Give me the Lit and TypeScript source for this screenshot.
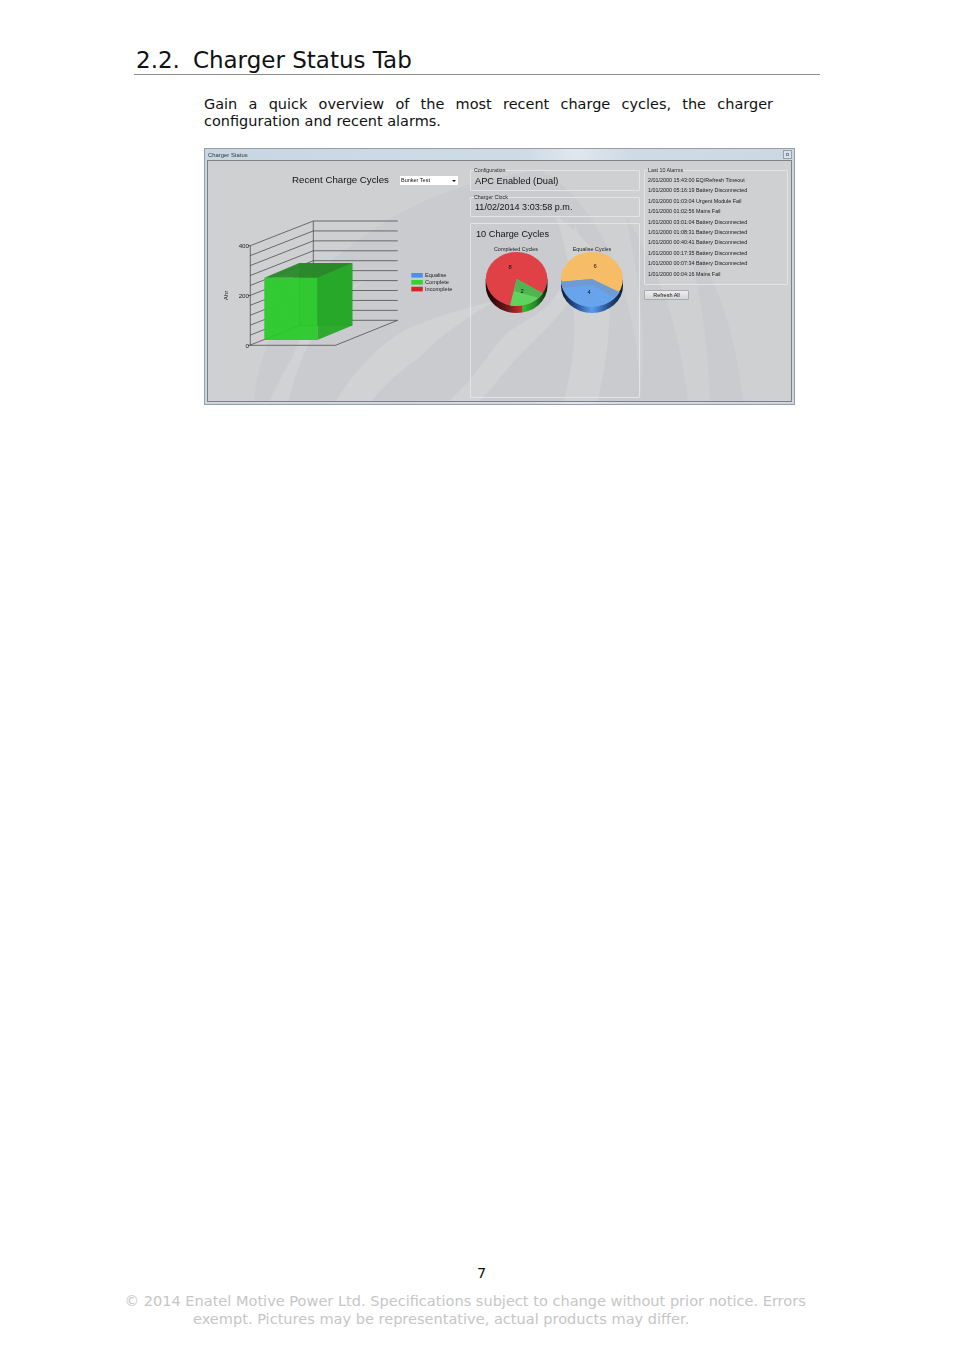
import { LitElement, html, css, svg } from "lit";
import { customElement } from "lit/decorators.js";

const alarms = [
  "2/01/2000 15:43:00 EQ/Refresh Timeout",
  "1/01/2000 05:16:19 Battery Disconnected",
  "1/01/2000 01:03:04 Urgent Module Fail",
  "1/01/2000 01:02:56 Mains Fail",
  "1/01/2000 03:01:04 Battery Disconnected",
  "1/01/2000 01:08:31 Battery Disconnected",
  "1/01/2000 00:40:41 Battery Disconnected",
  "1/01/2000 00:17:35 Battery Disconnected",
  "1/01/2000 00:07:34 Battery Disconnected",
  "1/01/2000 00:04:16 Mains Fail",
];

const range = (n: number) => Array.from({ length: n }, (_, i) => i);

function chart() {
  return svg`
    <svg class="chart" viewBox="208 161 262 242" width="262" height="242">
      <g stroke="#3d3d3d" stroke-width="0.7" fill="none">
        ${range(11).map((i) => {
          const yb = 221 + i * 9.93;
          const yf = 245.7 + i * 9.93;
          return svg`<path d="M250.3 ${yf}L313.3 ${yb}H397.7" />`;
        })}
        <path d="M250.3 245.7V345.3M313.3 221V320.3" />
        <path d="M250.3 345.3H335.5L397.7 320.3" />
        ${[245.7, 295.5, 345.3].map((y) => svg`<path d="M248 ${y}H250.3" />`)}
      </g>
      <path d="M299.3 263H352.3V325.4H299.3Z" fill="#1f8f1f" fill-opacity="0.9" />
      <path d="M264.3 277.7L299.3 263H352.3L317.3 277.7Z" fill="#2a882a" fill-opacity="0.95" />
      <path d="M317.3 277.7L352.3 263V325.4L317.3 340Z" fill="#28a828" fill-opacity="0.97" />
      <path d="M264.3 277.7H317.3V340H264.3Z" fill="#30cb30" fill-opacity="0.98" />
      <path d="M299.3 263V325.4L264.3 340M299.3 325.4H352.3" stroke="#1f8a1f" stroke-width="0.5" fill="none" opacity="0.3" />
      <text class="tick" x="249" y="248" text-anchor="end">400</text>
      <text class="tick" x="249" y="298" text-anchor="end">200</text>
      <text class="tick" x="249" y="347.5" text-anchor="end">0</text>
      <text class="tick" transform="translate(228 295.5) rotate(-90)" text-anchor="middle">Ahr</text>
      <rect x="411.3" y="273" width="11.5" height="4.6" fill="#4f8fe8" />
      <rect x="411.3" y="280" width="11.5" height="4.6" fill="#35d035" />
      <rect x="411.3" y="286.8" width="11.5" height="4.6" fill="#dd2025" />
      <text class="legend" x="425" y="277.3">Equalise</text>
      <text class="legend" x="425" y="284.2">Complete</text>
      <text class="legend" x="425" y="291">Incomplete</text>
    </svg>`;
}

function pies() {
  return svg`
    <svg class="pies" viewBox="470 240 170 80" width="170" height="80">
      <defs>
        <linearGradient id="sideL" x1="0" x2="1" y1="0" y2="0">
          <stop offset="0" stop-color="#1a0505" />
          <stop offset="0.3" stop-color="#5e1616" />
          <stop offset="0.58" stop-color="#c23030" />
          <stop offset="0.6" stop-color="#2ec22e" />
          <stop offset="0.8" stop-color="#2a8a2a" />
          <stop offset="1" stop-color="#0c200c" />
        </linearGradient>
        <linearGradient id="sideR" x1="0" x2="1" y1="0" y2="0">
          <stop offset="0" stop-color="#0d1a30" />
          <stop offset="0.25" stop-color="#28528f" />
          <stop offset="0.5" stop-color="#5a9bf0" />
          <stop offset="0.75" stop-color="#28528f" />
          <stop offset="1" stop-color="#0d1a30" />
        </linearGradient>
      </defs>
      <text class="pie-title" x="516" y="251" text-anchor="middle">Completed Cycles</text>
      <text class="pie-title" x="592" y="251" text-anchor="middle">Equalise Cycles</text>

      <path d="M485.7 279V286A30.8 27 0 0 0 547.5 286V279Z" fill="url(#sideL)" />
      <ellipse cx="516.6" cy="279" rx="30.8" ry="27" fill="#e04146" />
      <path d="M516.7 279L542.7 293.3A30.8 27 0 0 1 510 305.4Z" fill="#5fd35f" />
      <path d="M516.7 279L542.7 293.3L539 298L514 291Z" fill="#50b550" />
      <text class="pie-num" x="510" y="269" text-anchor="middle">8</text>
      <text class="pie-num" x="522" y="293" text-anchor="middle">2</text>

      <path d="M561 279V286A31 27 0 0 0 623 286V279Z" fill="url(#sideR)" />
      <ellipse cx="592" cy="279" rx="31" ry="27" fill="#f6bd66" />
      <path d="M592 279L619.5 292.3A31 27 0 0 1 561 281.7Z" fill="#67a4ec" />
      <path d="M592 279L619.5 292.3L613.5 297L592 285L563 288L561 281.7Z" fill="#6f9bd2" />
      <text class="pie-num" x="595" y="268" text-anchor="middle">6</text>
      <text class="pie-num" x="589" y="294" text-anchor="middle">4</text>
    </svg>`;
}

@customElement("app-root")
export class AppRoot extends LitElement {
  static styles = css`
    :host {
      display: flex;
      flex-direction: column;
      height: 1351px;
      box-sizing: border-box;
      padding-top: 47px;
      font-family: "DejaVu Sans", Verdana, sans-serif;
      color: #111;
      background: #fff;
      overflow: hidden;
    }
    h2 {
      display: flex;
      gap: 13px;
      margin: 0 134px;
      padding: 0 0 0 2px;
      font-size: 23px;
      line-height: 27px;
      font-weight: 400;
      border-bottom: 1px solid #8e8e8e;
    }
    .intro {
      margin: 21px 181px 0 204px;
      font-size: 14.48px;
      line-height: 17px;
      text-align: justify;
    }
    .window {
      position: relative;
      box-sizing: border-box;
      width: 591px;
      height: 257px;
      margin: 18px 0 0 204px;
      border: 1px solid #9a9ea4;
      background: linear-gradient(90deg, #c8d6e3, #cfdce8 55%, #e0e7ee 63%, #cfdbe6 72%, #cbd8e4);
      padding: 0 2px 2px 2px;
      display: flex;
      flex-direction: column;
      font-family: "Liberation Sans", Arial, sans-serif;
      overflow: hidden;
    }
    .titlebar {
      height: 11px;
      flex: none;
      display: flex;
      align-items: center;
      justify-content: space-between;
      font-size: 5.9px;
      color: #333;
      padding: 0 0 0 1px;
      filter: blur(0.2px);
    }
    .restore {
      width: 7px;
      height: 7px;
      border: 1px solid #9a9ea3;
      display: flex;
      align-items: center;
      justify-content: center;
      background: #d8e2ea;
    }
    .restore i {
      width: 3px;
      height: 3px;
      border: 1px solid #8a8a8a;
      box-sizing: border-box;
    }
    .panel {
      position: relative;
      flex: 1;
      border: 1px solid #7f8388;
      background: #cfd0d2;
      display: flex;
      overflow: hidden;
      filter: blur(0.25px);
    }
    .swoosh {
      position: absolute;
      left: 0;
      top: 0;
    }
    .chart-col {
      position: relative;
      width: 262px;
      flex: none;
    }
    .chart {
      display: block;
    }
    .tick, .legend, .pie-title, .pie-num {
      font-family: "Liberation Sans", Arial, sans-serif;
      fill: #222;
    }
    .tick { font-size: 6.2px; }
    .legend { font-size: 5.6px; }
    .pie-title { font-size: 5.45px; }
    .pie-num { font-size: 5.8px; fill: #111; }
    .chart-title {
      position: absolute;
      left: 84px;
      top: 13px;
      font-size: 9.7px;
      line-height: 12px;
      color: #111;
    }
    .select {
      position: absolute;
      left: 192px;
      top: 15px;
      width: 58px;
      height: 9px;
      background: #fff;
      font-size: 5.5px;
      line-height: 9px;
      color: #111;
      padding-left: 1px;
      box-sizing: border-box;
    }
    .select::after {
      content: "";
      position: absolute;
      right: 2px;
      top: 3.5px;
      border: 2px solid transparent;
      border-top: 2.5px solid #111;
      border-bottom: 0;
    }
    .mid-col {
      position: relative;
      width: 170px;
      flex: none;
      padding-top: 9px;
      display: flex;
      flex-direction: column;
      gap: 6px;
    }
    .group {
      position: relative;
      box-sizing: border-box;
      border: 1px solid #e3e4e6;
      border-radius: 1px;
    }
    .group > label {
      position: absolute;
      left: 3px;
      top: -4px;
      font-size: 5.3px;
      line-height: 7px;
      color: #222;
      white-space: nowrap;
    }
    .value {
      height: 19px;
      font-size: 9.25px;
      padding: 4px 0 0 4px;
      line-height: 12px;
      color: #111;
      box-sizing: border-box;
      white-space: nowrap;
    }
    .value.clock {
      height: 18px;
      padding-top: 3px;
      font-size: 9.05px;
    }
    .cycles {
      height: 175px;
      box-sizing: border-box;
      padding: 4px 0 0 0;
    }
    .cycles h3 {
      margin: 0 0 0 5px;
      font-size: 9.2px;
      line-height: 12px;
      font-weight: 400;
      color: #111;
    }
    .pies {
      display: block;
      margin: 0 0 0 -1px;
    }
    .right-col {
      position: relative;
      margin-left: 4px;
      width: 144px;
      flex: none;
      padding-top: 9px;
    }
    .alarms {
      height: 115px;
      padding: 4px 0 0 3px;
      box-sizing: border-box;
    }
    .alarms div {
      font-size: 5.4px;
      line-height: 10.4px;
      color: #1a1a1a;
      white-space: nowrap;
    }
    button {
      display: block;
      margin: 5px 0 0 0;
      width: 45px;
      height: 10px;
      padding: 0;
      border: 1px solid #a9abae;
      border-radius: 1px;
      background: linear-gradient(#eeeeee, #d5d5d5);
      font: 5.5px/8px "Liberation Sans", Arial, sans-serif;
      color: #111;
    }
    .page-no {
      margin-top: auto;
      margin-left: 477px;
      font-size: 14.5px;
      line-height: 17px;
    }
    .footer {
      margin: 10px 0 23px 124.5px;
      font-size: 14.55px;
      line-height: 18px;
      color: #c6c6c6;
      white-space: nowrap;
    }
    .footer span {
      display: block;
    }
    .footer span + span {
      margin-left: 68.5px;
    }
  `;

  render() {
    return html`
      <h2><span>2.2.</span><span>Charger Status Tab</span></h2>
      <p class="intro">Gain a quick overview of the most recent charge cycles, the charger configuration and recent alarms.</p>
      <div class="window">
        <div class="titlebar"><span>Charger Status</span><span class="restore"><i></i></span></div>
        <div class="panel">
          <svg class="swoosh" viewBox="208 161 586 242" width="586" height="242">
            <g fill="#cacbce">
              <path d="M254 403C258 340 290 280 393 217C430 197 470 180 540 170C600 200 640 300 640 403Z" />
              <path d="M640 403C645 350 645 300 625 215C660 270 680 330 688 403Z" />
              <path d="M710 403H743C738 350 725 290 680 220C700 280 708 340 710 403Z" />
            </g>
            <g fill="#d1d2d4">
              <path d="M269 403H288C292 385 300 362 308 345C325 315 345 295 365 280C335 292 305 320 292 358C282 375 274 390 269 403Z" />
              <path d="M335 403C345 385 370 350 405 330C430 318 460 310 490 302V304C470 316 440 335 420 357C400 370 380 390 370 403Z" />
              <path d="M447 403L470 380C485 360 500 340 507 333C530 318 545 310 550 303C565 285 575 260 575 225C590 260 585 285 570 300C555 325 520 350 490 390C485 395 480 400 477 403Z" />
              <path d="M563 403C572 370 578 335 572 300C570 270 565 240 555 215C590 240 612 270 610 300C610 335 605 370 597 403Z" />
            </g>
          </svg>
          <div class="chart-col">
            ${chart()}
            <div class="chart-title">Recent Charge Cycles</div>
            <div class="select">Bunker Test</div>
          </div>
          <div class="mid-col">
            <div class="group"><label>Configuration</label><div class="value">APC Enabled (Dual)</div></div>
            <div class="group"><label>Charger Clock</label><div class="value clock">11/02/2014 3:03:58 p.m.</div></div>
            <div class="group cycles">
              <h3>10 Charge Cycles</h3>
              ${pies()}
            </div>
          </div>
          <div class="right-col">
            <div class="group alarms">
              <label>Last 10 Alarms</label>
              ${alarms.map((a) => html`<div>${a}</div>`)}
            </div>
            <button>Refresh All</button>
          </div>
        </div>
      </div>
      <div class="page-no">7</div>
      <div class="footer">
        <span>© 2014 Enatel Motive Power Ltd. Specifications subject to change without prior notice. Errors</span>
        <span>exempt. Pictures may be representative, actual products may differ.</span>
      </div>
    `;
  }
}
